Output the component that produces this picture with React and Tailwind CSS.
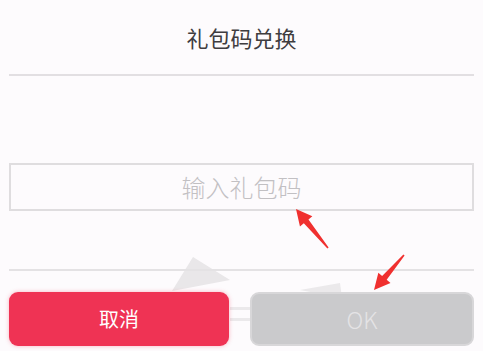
import React from 'react'

function Arrow({ x1, y1, x2, y2 }) {
  // red pointer arrow drawn from tail (x1,y1) to tip (x2,y2)
  const dx = x2 - x1
  const dy = y2 - y1
  const len = Math.sqrt(dx * dx + dy * dy)
  const ux = dx / len
  const uy = dy / len
  const px = -uy
  const py = ux
  const head = 16
  const bx = x2 - ux * head
  const by = y2 - uy * head
  const points = [
    [x1 + px * 0.8, y1 + py * 0.8],
    [bx + px * 3, by + py * 3],
    [bx + px * 8, by + py * 8],
    [x2, y2],
    [bx - px * 8, by - py * 8],
    [bx - px * 3, by - py * 3],
    [x1 - px * 0.8, y1 - py * 0.8],
  ]
  return <polygon points={points.map((p) => p.join(',')).join(' ')} fill="#f0302f" />
}

export default function App() {
  return (
    <div
      className="relative w-full h-[351px] overflow-hidden bg-[#fdfbfd] px-[9px] flex flex-col"
      style={{ fontFamily: '"Noto Sans CJK SC", "Noto Sans", sans-serif' }}
    >
      {/* faded background shapes */}
      <svg className="absolute inset-0 pointer-events-none" width="483" height="351">
        <polygon points="193,257 172,291 230,280" fill="#e9e7e9" />
        <polygon points="300,290 340,283 342,298" fill="#ebe9eb" />
        <rect x="230" y="307" width="22" height="3" fill="#ebe9eb" />
        <rect x="230" y="318" width="22" height="3" fill="#ebe9eb" />
      </svg>

      <div className="relative h-[74px] flex items-center justify-center text-[22px] text-[#3f3d40]">
        礼包码兑换
      </div>
      <div className="relative h-[2px] bg-[#e2dfe2]" />

      <div className="relative mt-[87px] h-[48px] border-2 border-[#dfdddf] flex items-center justify-center text-[24px] font-light text-[#c2c0c3]">
        输入礼包码
      </div>

      <div className="relative mt-[58px] h-[2px] bg-[#e4e2e4]" />

      <div className="relative mt-[21px] flex gap-[21px]">
        <button className="flex-1 h-[54px] rounded-[9px] bg-[#ef3354] text-white text-[20px] shadow-[0_0_4px_rgba(239,51,84,0.35)]">
          取消
        </button>
        <button className="flex-1 h-[54px] rounded-[9px] bg-[#cacacc] border-2 border-[#d8d7d9] text-[#e4e3e5] text-[23px] font-light">
          OK
        </button>
      </div>

      <svg className="absolute inset-0 pointer-events-none" width="483" height="351">
        <Arrow x1={328} y1={248} x2={296} y2={209} />
        <Arrow x1={404} y1={255} x2={374} y2={290} />
      </svg>
    </div>
  )
}
